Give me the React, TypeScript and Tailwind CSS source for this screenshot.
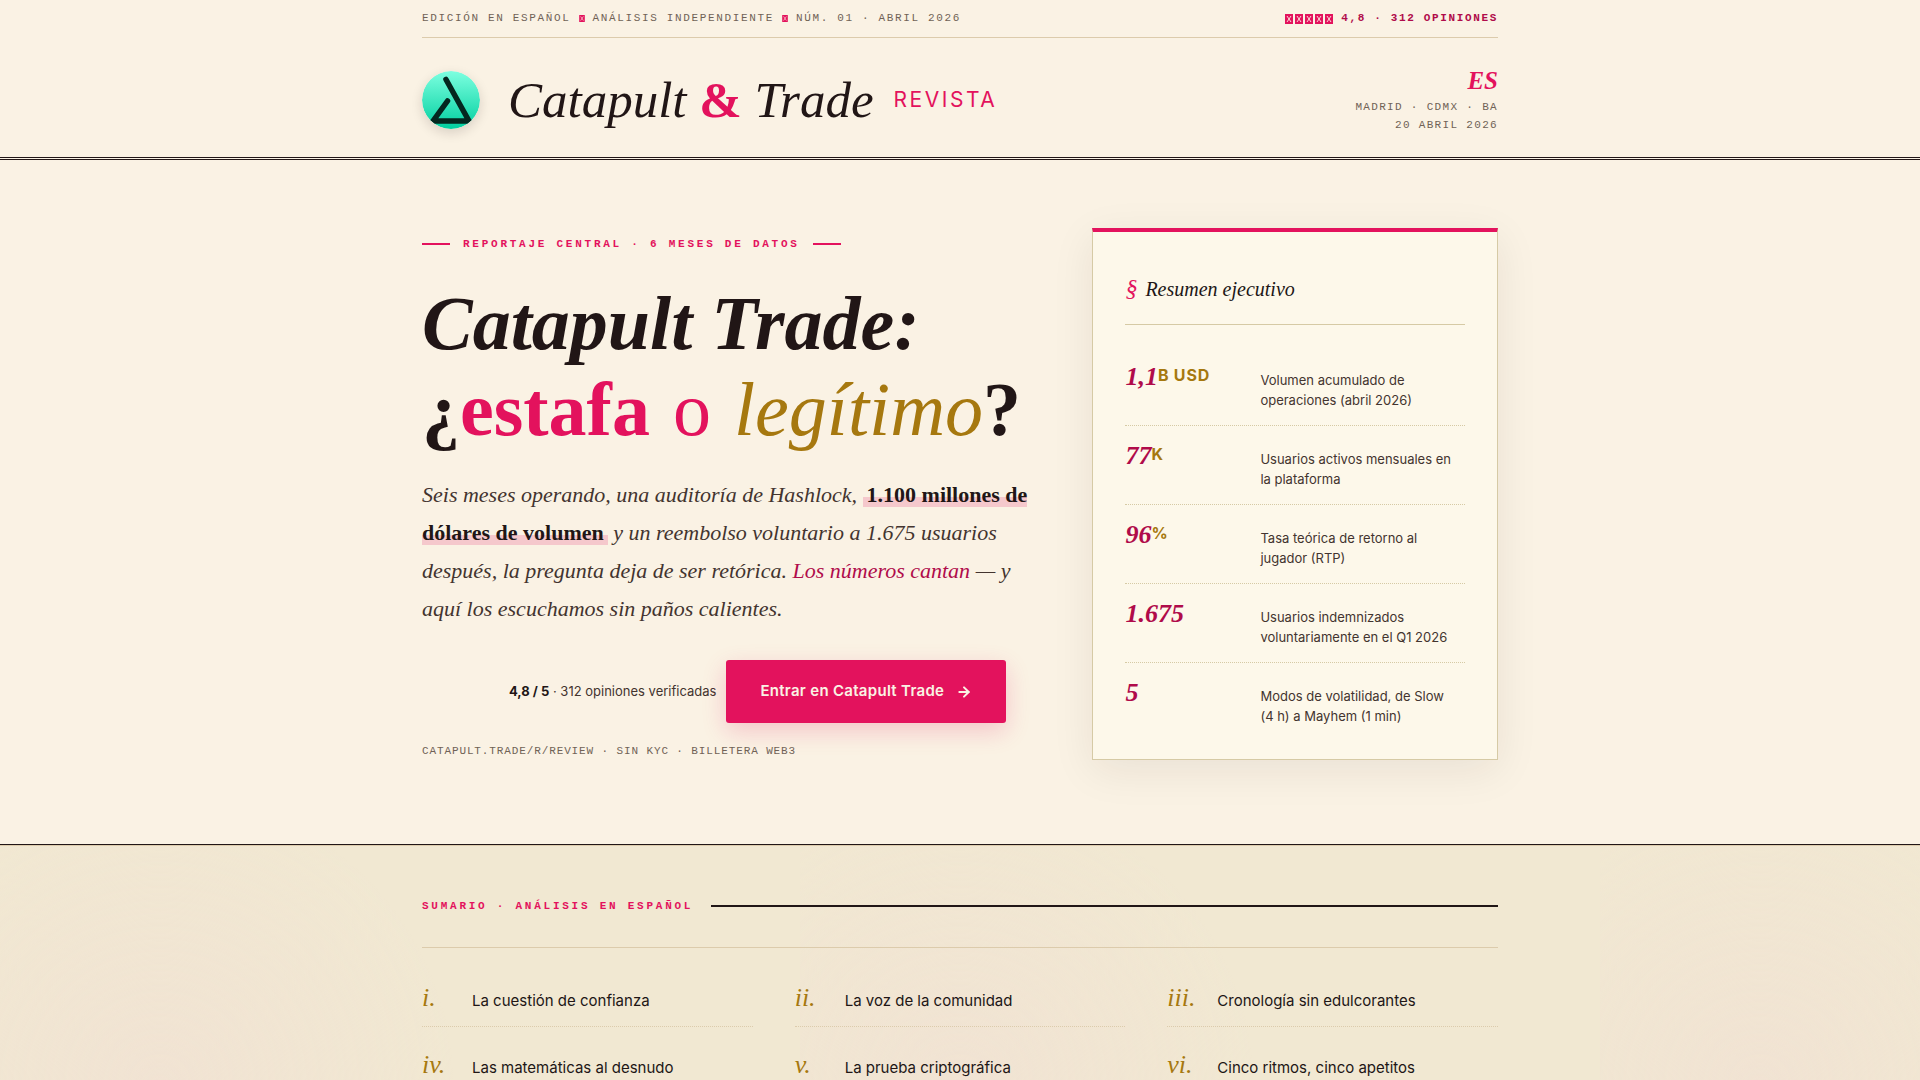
import { ReactNode } from 'react';
import { ArrowRight } from 'lucide-react';

const serif = "font-['Liberation_Serif',serif]";
const mono = "font-['Liberation_Mono',monospace]";

interface Stat {
  value: string;
  unit?: string;
  label: string;
}

const stats: Stat[] = [
  { value: '1,1', unit: 'B USD', label: 'Volumen acumulado de operaciones (abril 2026)' },
  { value: '77', unit: 'K', label: 'Usuarios activos mensuales en la plataforma' },
  { value: '96', unit: '%', label: 'Tasa teórica de retorno al jugador (RTP)' },
  { value: '1.675', label: 'Usuarios indemnizados voluntariamente en el Q1 2026' },
  { value: '5', label: 'Modos de volatilidad, de Slow (4\u00a0h) a Mayhem (1\u00a0min)' },
];

const chapters = [
  { num: 'i.', title: 'La cuestión de confianza' },
  { num: 'ii.', title: 'La voz de la comunidad' },
  { num: 'iii.', title: 'Cronología sin edulcorantes' },
  { num: 'iv.', title: 'Las matemáticas al desnudo' },
  { num: 'v.', title: 'La prueba criptográfica' },
  { num: 'vi.', title: 'Cinco ritmos, cinco apetitos' },
];

function Container({ children, className = '' }: { children: ReactNode; className?: string }) {
  return <div className={`mx-auto w-full max-w-[1140px] px-8 ${className}`}>{children}</div>;
}

/* Crossed box used as star and separator ornament */
function Glyph({ className }: { className: string }) {
  return (
    <svg viewBox="0 0 8 10" className={`inline-block ${className}`} aria-hidden="true">
      <rect width="8" height="10" fill="#e3125d" />
      <path d="M2 2l4 6M6 2l-4 6" stroke="#faf2e4" strokeWidth="0.9" />
    </svg>
  );
}

function Logo() {
  return (
    <svg viewBox="0 0 58 58" className="size-[58px] shrink-0 rounded-full shadow-[0_4px_12px_rgba(33,22,22,0.15)]" aria-hidden="true">
      <defs>
        <linearGradient id="logo-fill" x1="0" y1="0" x2="0" y2="1">
          <stop offset="0" stopColor="#7dffe0" />
          <stop offset="1" stopColor="#00cf9f" />
        </linearGradient>
        <clipPath id="logo-clip">
          <circle cx="29" cy="29" r="29" />
        </clipPath>
      </defs>
      <g clipPath="url(#logo-clip)">
        <rect width="58" height="58" fill="url(#logo-fill)" />
        <path
          d="M24 8.500L47 50H11L25.500 30"
          fill="none"
          stroke="#04271f"
          strokeWidth="5.500"
          strokeLinecap="round"
          strokeLinejoin="round"
        />
      </g>
    </svg>
  );
}

function Masthead() {
  return (
    <header className="border-b-[3px] border-double border-[#211616]">
      <Container>
        <div className={`flex h-[38px] items-center justify-between border-b border-[#dccbac] text-[11px] uppercase tracking-[0.15em] text-[#706256] ${mono}`}>
          <div className="flex items-center gap-2">
            <span>Edición en español</span>
            <Glyph className="h-[7px] w-[6px]" />
            <span>Análisis independiente</span>
            <Glyph className="h-[7px] w-[6px]" />
            <span>Núm. 01 · Abril 2026</span>
          </div>
          <div className="flex items-center gap-2 font-bold text-[#b00b4a]">
            <span className="flex gap-[2px]" role="img" aria-label="5 de 5">
              {[1, 2, 3, 4, 5].map((n) => (
                <Glyph key={n} className="h-[10px] w-[8px]" />
              ))}
            </span>
            <span>4,8 · 312 opiniones</span>
          </div>
        </div>
        <div className="flex items-center justify-between pt-[26px] pb-[21px]">
          <div className="flex items-center gap-7">
            <Logo />
            <div className="flex items-center gap-5">
              <a href="#" className={`text-[51px] leading-[72px] italic text-[#211616] ${serif}`}>
                Catapult <span className="font-bold not-italic text-[#e3125d]">&amp;</span> Trade
              </a>
              <span className="text-[21px] uppercase tracking-[0.12em] text-[#e3125d]">Revista</span>
            </div>
          </div>
          <div className={`pb-[2px] text-right text-[11px] leading-[18px] uppercase tracking-[0.12em] text-[#706256] ${mono}`}>
            <div className={`text-[25px] leading-[34px] font-bold italic tracking-normal text-[#e3125d] ${serif}`}>ES</div>
            <div>Madrid · CDMX · BA</div>
            <div>20 abril 2026</div>
          </div>
        </div>
      </Container>
    </header>
  );
}

function Hero() {
  return (
    <section className="border-b border-[#211616]">
      <Container className="grid grid-cols-[3fr_2fr] items-start gap-[62px] pt-[68px] pb-[84px]">
        <div className="pt-2">
          <div className={`flex items-center gap-[13px] text-[11px] leading-4 font-bold uppercase tracking-[0.25em] text-[#e3125d] ${mono}`}>
            <span className="h-[2px] w-7 bg-[#e3125d]" />
            Reportaje central · 6 meses de datos
            <span className="h-[2px] w-7 bg-[#e3125d]" />
          </div>
          <h1 className={`mt-7 text-[76px] leading-[86px] font-bold whitespace-nowrap text-[#211616] ${serif}`}>
            <em>Catapult Trade:</em>
            <br />
            ¿<span className="text-[#e3125d]">estafa</span> <span className="mx-1 font-normal text-[#e3125d]">o</span>{' '}
            <em className="font-normal text-[#a6780f]">legítimo</em>?
          </h1>
          <p className={`mt-6 text-[22px] leading-[38px] italic text-[#43342f] ${serif}`}>
            Seis meses operando, una auditoría de Hashlock,{' '}
            <strong className="bg-linear-to-b from-transparent from-60% to-[#f5c8cc] to-60% px-1 not-italic text-[#211616]">
              1.100 millones de dólares de volumen
            </strong>{' '}
            y un reembolso voluntario a 1.675 usuarios después, la pregunta deja de ser retórica.{' '}
            <span className="text-[#b00b4a]">Los números cantan</span> — y aquí los escuchamos sin paños calientes.
          </p>
          <div className="mt-8 flex items-center gap-[10px] pl-[87px] text-[13px] text-[#43342f]">
            <span>
              <strong className="text-[#211616]">4,8 / 5</strong> · 312 opiniones verificadas
            </span>
            <a
              href="#"
              className="flex h-[63px] items-center gap-3 rounded-[3px] bg-[#e3125d] px-[34px] text-[15px] font-semibold tracking-[0.02em] text-[#faf2e4] shadow-[0_8px_24px_rgba(227,18,93,0.2)]"
            >
              Entrar en Catapult Trade
              <ArrowRight size={16} strokeWidth={3} />
            </a>
          </div>
          <p className={`mt-[22px] text-[11px] leading-3 uppercase tracking-[0.08em] text-[#706256] ${mono}`}>
            catapult.trade/r/review · Sin KYC · Billetera Web3
          </p>
        </div>

        <aside className="border border-t-4 border-[#d6caa5] border-t-[#e3125d] bg-[#fdf8ea] px-8 pt-10 pb-[17px] shadow-[0_10px_40px_rgba(33,22,22,0.08)]">
          <h2 className={`flex items-baseline gap-2 border-b border-[#d6caa5] pb-[19px] text-[20px] leading-8 italic text-[#211616] ${serif}`}>
            <span className="text-[24px] text-[#e3125d]">§</span>
            Resumen ejecutivo
          </h2>
          <dl className="pt-[22px]">
            {stats.map((stat) => (
              <div
                key={stat.label}
                className="flex h-[79px] items-baseline border-b border-dotted border-[#d6caa5] pt-[14px] last:border-b-0"
              >
                <dt className={`w-[135px] shrink-0 text-[26px] leading-8 font-bold italic text-[#b00b4a] ${serif}`}>
                  {stat.value}
                  {stat.unit && (
                    <span className="align-[4px] font-['Inter',sans-serif] text-base font-bold tracking-[0.05em] not-italic text-[#a6780f]">
                      {stat.unit}
                    </span>
                  )}
                </dt>
                <dd className="text-[13px] leading-[20px] text-[#43342f]">{stat.label}</dd>
              </div>
            ))}
          </dl>
        </aside>
      </Container>
    </section>
  );
}

function Contents() {
  return (
    <section className="border-t border-[#dccbac] bg-[#f1e8d2] bg-[radial-gradient(circle_at_20%_40%,#f1e3d3,transparent_40%)] bg-size-[800px_600px] pt-[52px] pb-16">
      <Container>
        <div className="flex items-center gap-[18px]">
          <h2 className={`text-[11px] leading-4 font-bold uppercase tracking-[0.25em] text-[#e3125d] ${mono}`}>
            Sumario · Análisis en español
          </h2>
          <span className="h-[2px] flex-1 bg-[#211616]" />
        </div>
        <ol className="mt-[33px] grid grid-cols-3 gap-x-[42px] border-t border-[#dccbac] pt-3">
          {chapters.map((chapter) => (
            <li key={chapter.num} className="border-b border-dotted border-[#dccbac]">
              <a href="#" className="flex h-[66px] items-baseline pt-5 text-[15px] text-[#211616]">
                <span className={`w-[50px] text-[26px] leading-9 italic text-[#a6780f] ${serif}`}>{chapter.num}</span>
                {chapter.title}
              </a>
            </li>
          ))}
        </ol>
      </Container>
    </section>
  );
}

export default function App() {
  return (
    <div className="min-h-screen bg-[#faf2e4] font-['Inter',sans-serif]">
      <Masthead />
      <main>
        <Hero />
        <Contents />
      </main>
    </div>
  );
}
